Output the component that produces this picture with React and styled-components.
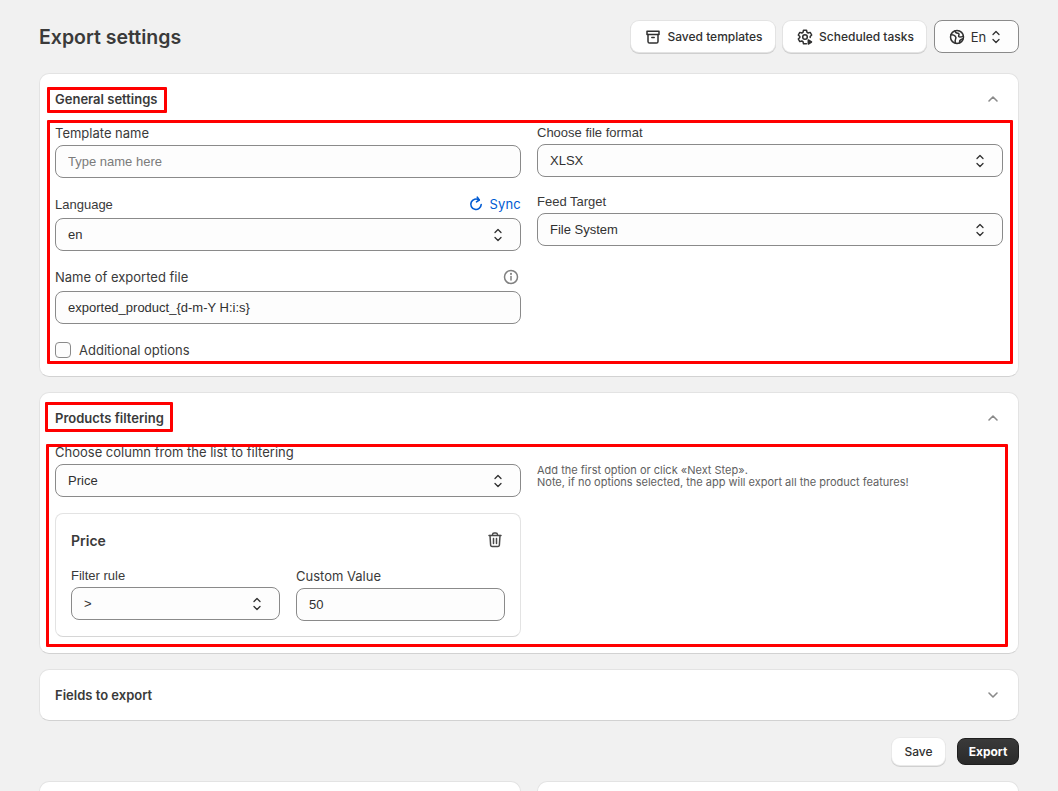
import React from "react";
import styled, { createGlobalStyle } from "styled-components";

const SYS = `"Liberation Sans", Arial, sans-serif`;

const Global = createGlobalStyle`
  html, body { margin: 0; padding: 0; height: 100%; overflow: hidden; background: #f1f1f1; }
  body { font-family: Inter, "Liberation Sans", sans-serif; color: #303030; font-size: 13px; }
  * { box-sizing: border-box; }
`;

const Page = styled.div`
  height: 791px;
  overflow: hidden;
  padding: 20px 39px 0;
  display: flex;
  flex-direction: column;
`;
const TopBar = styled.header`
  display: flex;
  align-items: center;
  justify-content: space-between;
  height: 33px;
  margin-bottom: 20px;
`;
const Title = styled.h1`
  margin: 2px 0 0;
  font-size: 19.5px;
  line-height: 33px;
  font-weight: 600;
  color: #3a3a3a;
`;
const TopActions = styled.div`
  display: flex;
  align-items: center;
  gap: 8px;
`;
const TopButton = styled.button`
  display: flex;
  align-items: center;
  justify-content: center;
  gap: 4px;
  width: ${(p) => p.$w}px;
  height: 31px;
  padding: 0;
  border: 0;
  border-radius: 8px;
  background: #fff;
  box-shadow: 0 0 0 1px #e3e3e3, 0 1px 0 1px #cfcfcf;
  font: 500 12px/20px Inter, sans-serif;
  color: #303030;
`;
const LangButton = styled(TopButton)`
  height: 33px;
  border: 1px solid #8a8a8a;
  box-shadow: none;
  background: #fdfdfd;
  font-weight: 400;
  font-size: 13px;
  & > svg:last-child { margin-left: -4px; }
`;
const Card = styled.section`
  position: relative;
  background: #fff;
  border: 1px solid #e3e3e3;
  border-bottom-color: #d2d2d2;
  border-radius: 10px;
  padding: 15px;
  margin-bottom: ${(p) => p.$mb ?? 15}px;
`;
const CardHead = styled.div`
  display: flex;
  align-items: center;
  justify-content: space-between;
  height: 20px;
  margin-bottom: ${(p) => p.$mb ?? 0}px;
`;
const CardTitle = styled.h2`
  margin: 0;
  font-size: 13px;
  line-height: 20px;
  font-weight: 620;
  color: #3a3a3a;
`;
const Toggle = styled.span`
  display: flex;
  width: 20px;
  height: 20px;
  color: #8a8a8a;
`;
const Columns = styled.div`
  display: grid;
  grid-template-columns: 466px 466px;
  column-gap: 16px;
  align-items: start;
`;
const Stack = styled.div`
  display: flex;
  flex-direction: column;
  gap: ${(p) => p.$gap}px;
  margin-top: ${(p) => p.$mt ?? 0}px;
`;
const Field = styled.div`
  display: flex;
  flex-direction: column;
  min-width: 0;
`;
const LabelRow = styled.div`
  display: flex;
  align-items: center;
  justify-content: space-between;
  height: 20px;
  margin-top: ${(p) => p.$mt ?? 0}px;
  margin-bottom: ${(p) => p.$gap ?? 2}px;
`;
const Label = styled.label`
  font-family: ${(p) => (p.$sys ? SYS : "inherit")};
  margin-top: ${(p) => (p.$sys ? 2 : 0)}px;
  font-size: 13px;
  line-height: 20px;
  color: #3a3a3a;
`;
const SyncLink = styled.a`
  display: flex;
  align-items: center;
  gap: 3px;
  color: #005bd3;
  font-size: 13px;
  line-height: 20px;
  letter-spacing: 0.2px;
`;
const InfoIcon = styled.span`
  display: flex;
  color: #808080;
`;
const TextInput = styled.input`
  width: 100%;
  height: 33px;
  padding: 0 12px;
  border: 1px solid #8a8a8a;
  border-radius: 8px;
  background: #fdfdfd;
  font: 400 13px/20px ${SYS};
  color: #303030;
  outline: none;
  &::placeholder { color: #7b7b7b; opacity: 1; }
`;
const SelectBox = styled.div`
  display: flex;
  align-items: center;
  justify-content: space-between;
  height: 33px;
  padding: 0 12px;
  border: 1px solid #8a8a8a;
  border-radius: 8px;
  background: #fdfdfd;
  font-family: ${SYS};
  font-size: 13px;
  line-height: 20px;
  color: #303030;
`;
const CheckRow = styled.div`
  display: flex;
  align-items: center;
  gap: 8px;
  height: 20px;
  margin-top: 16px;
  margin-bottom: 1px;
`;
const CheckBox = styled.span`
  width: 16px;
  height: 16px;
  border: 1px solid #8a8a8a;
  border-radius: 4px;
  background: #fdfdfd;
`;
const Hint = styled.p`
  margin: 22px 0 0;
  font-size: 11px;
  line-height: 12px;
  color: #616161;
`;
const RuleCard = styled.div`
  margin: 16px 0 1px;
  padding: 15px;
  border: 1px solid #e3e3e3;
  border-bottom-color: #d6d6d6;
  border-radius: 8px;
  background: #fff;
`;
const RuleHead = styled.div`
  display: flex;
  align-items: center;
  justify-content: space-between;
  height: 24px;
  margin-bottom: 12px;
`;
const RuleTitle = styled.h3`
  margin: 0;
  font-size: 14px;
  line-height: 24px;
  font-weight: 620;
  color: #3a3a3a;
`;
const Trash = styled.span`
  display: flex;
  margin-top: -3px;
  color: #4a4a4a;
`;
const RuleGrid = styled.div`
  display: grid;
  grid-template-columns: 209px 209px;
  column-gap: 16px;
`;
const Actions = styled.div`
  display: flex;
  justify-content: flex-end;
  gap: 12px;
  margin: 2px 0 16px;
`;
const SaveButton = styled.button`
  width: 53px;
  height: 27px;
  border: 0;
  border-radius: 8px;
  background: #fff;
  box-shadow: 0 0 0 1px #e9e9e9, 0 1px 0 1px #d0d0d0;
  font: 500 12px/20px Inter, sans-serif;
  color: #303030;
  padding: 0;
`;
const ExportButton = styled.button`
  width: 62px;
  height: 27px;
  border: 1px solid #1f1f1f;
  border-radius: 8px;
  background: linear-gradient(#3a3a3a, #2a2a2a);
  font: 650 12px/20px Inter, sans-serif;
  color: #fff;
  padding: 0;
`;
const BottomRow = styled.div`
  display: grid;
  grid-template-columns: 482px 482px;
  column-gap: 16px;
`;
const BottomCard = styled(Card)`
  height: 120px;
`;
const Annotation = styled.div`
  position: absolute;
  left: ${(p) => p.$l}px;
  top: ${(p) => p.$t}px;
  width: ${(p) => p.$w}px;
  height: ${(p) => p.$h}px;
  border: 3px solid #ff0000;
  border-radius: 1px;
  pointer-events: none;
`;

const Stroke = ({ size = 20, sw = 1.5, children }) => (
  <svg width={size} height={size} viewBox="0 0 20 20" fill="none" stroke="currentColor" strokeWidth={sw} strokeLinecap="round" strokeLinejoin="round">
    {children}
  </svg>
);
const SelectArrows = () => (
  <Stroke size={20} sw={1.3}>
    <path d="M7 7.500 10 4.500 13 7.500" />
    <path d="M7 12.500 10 15.500 13 12.500" />
  </Stroke>
);
const Chevron = ({ up }) => (
  <Stroke sw={1.6}>{up ? <path d="M6 12l4-4 4 4" /> : <path d="M6 8l4 4 4-4" />}</Stroke>
);
const ArchiveIcon = () => (
  <Stroke>
    <path d="M4 4.200h12v3.200H4z" />
    <path d="M5 7.400v7a1.600 1.600 0 0 0 1.600 1.600h6.800a1.600 1.600 0 0 0 1.600-1.600v-7" />
    <path d="M8.800 10.500h2.400" />
  </Stroke>
);
const GearPlayIcon = () => (
  <Stroke>
    <path d="M11.400 16.700H8.500l-.5-2-1.200-.7-2 .6-1.500-2.600 1.500-1.500V9.500L3.300 8l1.500-2.600 2 .6 1.200-.7.500-2h3l.5 2 1.200.7 2-.6L16.700 8l-1.500 1.500v1" />
    <circle cx="10" cy="10" r="2.300" />
    <path d="M13.300 13v4l3.200-2z" fill="currentColor" />
  </Stroke>
);
const GlobeIcon = () => (
  <Stroke>
    <circle cx="10" cy="10" r="6.500" />
    <path d="M4 7.800c1.800-.3 3.200.3 4.300 1.500.9 1 .9 2 .2 3-.6.9-.5 2.300.1 3.900" />
    <path d="M8 3.900c.3 1.500 1.400 2.300 2.800 2.400 1.300.1 1.500 1 1 2-.5 1.100 0 1.800 1.200 1.800 1.100 0 2.100-.4 3.300-1" />
    <path d="M12.800 15.700c-.4-1.500.1-2.800 1.400-3.300l2-.8" />
  </Stroke>
);
const SyncIcon = () => (
  <Stroke size={20} sw={1.600}>
    <path d="M15.200 10.500a5.200 5.200 0 1 1-2.200-4.500" />
    <path d="M11.300 3.200 13.300 6l-2.800 1.800" />
  </Stroke>
);
const Info = () => (
  <Stroke size={20} sw={1.500}>
    <circle cx="10" cy="10" r="6.500" />
    <path d="M10 9.500v3.500" />
    <path d="M10 6.800v.1" strokeWidth="2" />
  </Stroke>
);
const TrashIcon = () => (
  <Stroke>
    <path d="M7.500 5.200V4.500A1.700 1.700 0 0 1 9.200 3h1.600a1.700 1.700 0 0 1 1.700 1.500v.7" />
    <path d="M4 5.500h12" />
    <path d="M5 5.500l.6 9.200A1.600 1.600 0 0 0 7.200 16.500h5.600a1.600 1.600 0 0 0 1.600-1.800l.6-9.200" />
    <path d="M8.500 8.500v5M11.500 8.500v5" />
  </Stroke>
);

const Select = ({ value }) => (
  <SelectBox>
    <span>{value}</span>
    <SelectArrows />
  </SelectBox>
);

export default function App() {
  return (
    <Page>
      <Global />
      <TopBar>
        <Title>Export settings</Title>
        <TopActions>
          <TopButton $w={144}><ArchiveIcon />Saved templates</TopButton>
          <TopButton $w={143}><GearPlayIcon />Scheduled tasks</TopButton>
          <LangButton $w={85}><GlobeIcon />En<SelectArrows /></LangButton>
        </TopActions>
      </TopBar>

      <Card>
        <CardHead $mb={13}>
          <CardTitle>General settings</CardTitle>
          <Toggle><Chevron up /></Toggle>
        </CardHead>
        <Columns>
          <Stack $gap={16} $mt={1}>
            <Field>
              <LabelRow><Label>Template name</Label></LabelRow>
              <TextInput placeholder="Type name here" readOnly />
            </Field>
            <Field>
              <LabelRow $gap={4}>
                <Label $sys>Language</Label>
                <SyncLink><SyncIcon />Sync</SyncLink>
              </LabelRow>
              <Select value="en" />
            </Field>
            <Field>
              <LabelRow $gap={4}>
                <Label>Name of exported file</Label>
                <InfoIcon><Info /></InfoIcon>
              </LabelRow>
              <TextInput value="exported_product_{d-m-Y H:i:s}" readOnly />
            </Field>
          </Stack>
          <Stack $gap={14}>
            <Field>
              <LabelRow><Label $sys>Choose file format</Label></LabelRow>
              <Select value="XLSX" />
            </Field>
            <Field>
              <LabelRow><Label $sys>Feed Target</Label></LabelRow>
              <Select value="File System" />
            </Field>
          </Stack>
        </Columns>
        <CheckRow>
          <CheckBox />
          <Label>Additional options</Label>
        </CheckRow>
        <Annotation $l={7} $t={13} $w={120} $h={26} />
        <Annotation $l={7} $t={46} $w={966} $h={244} />
      </Card>

      <Card>
        <CardHead $mb={14}>
          <CardTitle>Products filtering</CardTitle>
          <Toggle><Chevron up /></Toggle>
        </CardHead>
        <Columns>
          <Field>
            <LabelRow><Label>Choose column from the list to filtering</Label></LabelRow>
            <Select value="Price" />
            <RuleCard>
              <RuleHead>
                <RuleTitle>Price</RuleTitle>
                <Trash><TrashIcon /></Trash>
              </RuleHead>
              <RuleGrid>
                <Field>
                  <LabelRow><Label $sys>Filter rule</Label></LabelRow>
                  <Select value=">" />
                </Field>
                <Field>
                  <LabelRow $mt={1}><Label>Custom Value</Label></LabelRow>
                  <TextInput value="50" readOnly />
                </Field>
              </RuleGrid>
            </RuleCard>
          </Field>
          <Hint>
            Add the first option or click «Next Step».
            <br />
            Note, if no options selected, the app will export all the product features!
          </Hint>
        </Columns>
        <Annotation $l={5} $t={9} $w={128} $h={30} />
        <Annotation $l={6} $t={51} $w={962} $h={203} />
      </Card>

      <Card>
        <CardHead>
          <CardTitle>Fields to export</CardTitle>
          <Toggle><Chevron /></Toggle>
        </CardHead>
      </Card>

      <Actions>
        <SaveButton>Save</SaveButton>
        <ExportButton>Export</ExportButton>
      </Actions>

      <BottomRow>
        <BottomCard />
        <BottomCard />
      </BottomRow>
    </Page>
  );
}
